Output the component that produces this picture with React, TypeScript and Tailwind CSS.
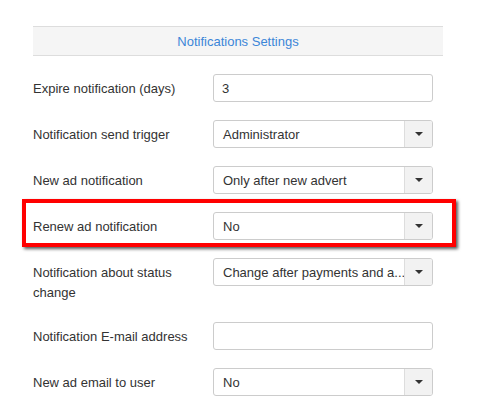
import type { ReactNode } from 'react'

function Caret() {
  return <span className="block h-0 w-0 border-x-[4px] border-t-[4px] border-x-transparent border-t-[#333]" />
}

function TextInput({ value = '' }: { value?: string }) {
  return (
    <div className="flex h-[28px] w-[220px] items-center rounded-[3px] border border-[#ccc] bg-white pl-[8px] pt-px text-[13px] text-[#333]">
      {value}
    </div>
  )
}

function Select({ value }: { value: string }) {
  return (
    <div className="flex h-[28px] w-[220px] overflow-hidden rounded-[3px] border border-[#ccc] bg-white text-[13px] text-[#333]">
      <div className="flex min-w-0 flex-1 items-center pl-[9px] pt-px">
        <span className="whitespace-nowrap">{value}</span>
      </div>
      <div className="flex w-[28px] flex-none items-center justify-center border-l border-[#ddd] bg-[#f2f2f2]">
        <Caret />
      </div>
    </div>
  )
}

function Row({ label, children, highlight }: { label: string; children: ReactNode; highlight?: boolean }) {
  return (
    <div className="relative flex items-start">
      <label className="w-[180px] flex-none pb-[1px] pr-2 pt-[5px] text-[13px] leading-[20px] text-[#333]">{label}</label>
      {children}
      {highlight && (
        <div className="pointer-events-none absolute left-[-11px] top-[-13px] h-[48px] w-[434px] border-[4px] border-[#f00] shadow-[2px_2px_3px_rgba(0,0,0,0.65)]" />
      )}
    </div>
  )
}

export default function App() {
  return (
    <div className="min-h-[405px] bg-white pl-[33px] pt-[26px] font-['Liberation_Sans',Arial,sans-serif]">
      <div className="w-[410px]">
        <div className="flex h-[30px] items-center justify-center border-y border-[#ddd] bg-[#f5f5f5] pt-px text-[13px] text-[#3c86d8]">
          Notifications Settings
        </div>
        <div className="mt-[18px] flex flex-col gap-[18px]">
          <Row label="Expire notification (days)">
            <TextInput value="3" />
          </Row>
          <Row label="Notification send trigger">
            <Select value="Administrator" />
          </Row>
          <Row label="New ad notification">
            <Select value="Only after new advert" />
          </Row>
          <Row label="Renew ad notification" highlight>
            <Select value="No" />
          </Row>
          <Row label="Notification about status change">
            <Select value="Change after payments and a..." />
          </Row>
          <Row label="Notification E-mail address">
            <TextInput />
          </Row>
          <Row label="New ad email to user">
            <Select value="No" />
          </Row>
        </div>
      </div>
    </div>
  )
}
